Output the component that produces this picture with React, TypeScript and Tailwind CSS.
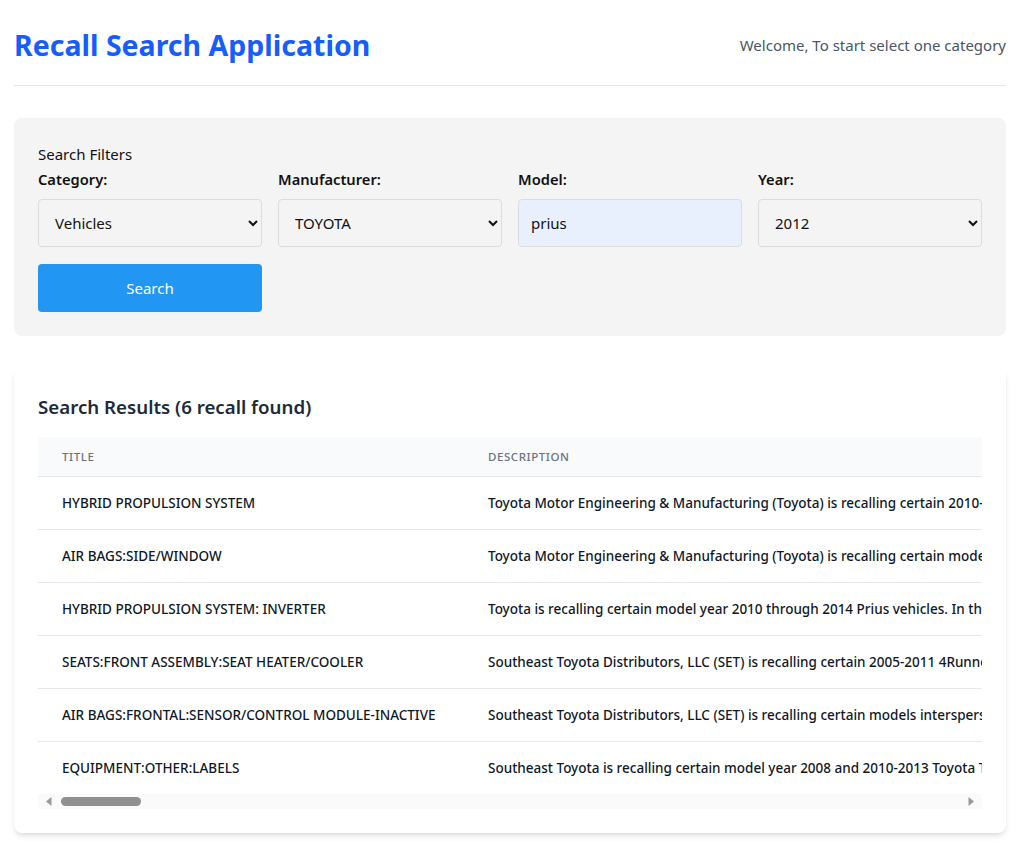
import { useState } from "react";

const recalls = [
  {
    title: "HYBRID PROPULSION SYSTEM",
    description:
      "Toyota Motor Engineering & Manufacturing (Toyota) is recalling certain 2010-2015 Prius vehicles. The hybrid system may enter a fail-safe mode and the vehicle may lose drive power.",
  },
  {
    title: "AIR BAGS:SIDE/WINDOW",
    description:
      "Toyota Motor Engineering & Manufacturing (Toyota) is recalling certain model year 2012 Prius vehicles. The curtain shield air bag inflator may not deploy as intended.",
  },
  {
    title: "HYBRID PROPULSION SYSTEM: INVERTER",
    description:
      "Toyota is recalling certain model year 2010 through 2014 Prius vehicles. In the affected vehicles, the software settings may cause higher thermal stress in transistors.",
  },
  {
    title: "SEATS:FRONT ASSEMBLY:SEAT HEATER/COOLER",
    description:
      "Southeast Toyota Distributors, LLC (SET) is recalling certain 2005-2011 4Runner, Camry, Prius and Tundra vehicles equipped with aftermarket seat heaters.",
  },
  {
    title: "AIR BAGS:FRONTAL:SENSOR/CONTROL MODULE-INACTIVE",
    description:
      "Southeast Toyota Distributors, LLC (SET) is recalling certain models interspersed among model years 2009-2012 vehicles that had seat covers installed.",
  },
  {
    title: "EQUIPMENT:OTHER:LABELS",
    description:
      "Southeast Toyota is recalling certain model year 2008 and 2010-2013 Toyota Tundra, Prius and Camry vehicles. The load carrying capacity label may be incorrect.",
  },
];

function App() {
  const [category, setCategory] = useState("Vehicles");
  const [manufacturer, setManufacturer] = useState("TOYOTA");
  const [model, setModel] = useState("prius");
  const [year, setYear] = useState("2012");

  const selectClass =
    "h-12 w-full rounded border border-[#dcdcdc] bg-[#f4f4f4] px-3 text-[15px] text-[#111] outline-none";

  return (
    <div
      className="min-h-screen bg-white pl-[14px] pr-[22px] text-[#111]"
      style={{ fontFamily: '"Noto Sans", "Open Sans", sans-serif' }}
    >
      {/* header */}
      <div className="flex h-[86px] items-center justify-between border-b border-[#e5e5e5] pt-[5px]">
        <h1 className="text-[28.5px] font-bold text-blue-600">Recall Search Application</h1>
        <p className="text-[15px] text-gray-600">Welcome, To start select one category</p>
      </div>

      {/* filters */}
      <div className="mt-8 rounded-lg bg-[#f4f4f4] px-6 pt-6 pb-6">
        <div className="text-[15px] leading-6">Search Filters</div>
        <div className="grid grid-cols-4 gap-4">
          <div>
            <label className="mb-[7px] block text-[14.7px] leading-[26px] font-semibold">Category:</label>
            <select className={selectClass} value={category} onChange={(e) => setCategory(e.target.value)}>
              <option>Vehicles</option>
              <option>Tires</option>
              <option>Child Seats</option>
            </select>
          </div>
          <div>
            <label className="mb-[7px] block text-[14.7px] leading-[26px] font-semibold">Manufacturer:</label>
            <select className={selectClass} value={manufacturer} onChange={(e) => setManufacturer(e.target.value)}>
              <option>TOYOTA</option>
              <option>HONDA</option>
              <option>FORD</option>
            </select>
          </div>
          <div>
            <label className="mb-[7px] block text-[14.7px] leading-[26px] font-semibold">Model:</label>
            <input
              className="h-12 w-full rounded border border-[#dcdcdc] bg-[#e8f0fe] px-3 text-[15px] outline-none"
              value={model}
              onChange={(e) => setModel(e.target.value)}
            />
          </div>
          <div>
            <label className="mb-[7px] block text-[14.7px] leading-[26px] font-semibold">Year:</label>
            <select className={selectClass} value={year} onChange={(e) => setYear(e.target.value)}>
              <option>2012</option>
              <option>2013</option>
              <option>2014</option>
            </select>
          </div>
        </div>
        <div className="mt-[17px] grid grid-cols-4 gap-4">
          <button className="h-12 rounded bg-[#2196f3] text-[15px] text-white">Search</button>
        </div>
      </div>

      {/* results */}
      <div className="mt-8 rounded-lg bg-white px-6 pt-[25px] pb-6 shadow-md">
        <h2 className="mb-4 text-[18.7px] leading-7 font-semibold text-gray-800">
          Search Results ({recalls.length} recall found)
        </h2>
        <div className="overflow-hidden">
          <table className="min-w-full whitespace-nowrap text-left">
            <thead className="bg-gray-50">
              <tr>
                <th className="px-6 py-3 text-[11.5px] leading-[15px] font-medium uppercase tracking-wider text-gray-500">
                  <div className="w-[378px]">Title</div>
                </th>
                <th className="px-6 py-3 text-[11.5px] leading-[15px] font-medium uppercase tracking-wider text-gray-500">
                  Description
                </th>
              </tr>
            </thead>
            <tbody className="divide-y divide-gray-200 border-t border-gray-200">
              {recalls.map((r) => (
                <tr key={r.title}>
                  <td className="px-6 py-4 text-[13.5px] leading-5 font-medium text-gray-900">{r.title}</td>
                  <td className="px-6 py-4 text-[13.5px] leading-5 font-medium text-gray-900">{r.description}</td>
                </tr>
              ))}
            </tbody>
          </table>
          {/* horizontal scrollbar */}
          <div className="flex h-[15px] items-center bg-[#fafafa] px-[7px]">
            <svg width="8" height="9" viewBox="0 0 8 9" className="shrink-0">
              <path d="M6.5 0 L1 4.5 L6.5 9 Z" fill="#9a9a9a" />
            </svg>
            <div className="ml-2 h-[9px] w-[80px] rounded-full bg-[#909090]" />
            <div className="flex-1" />
            <svg width="8" height="9" viewBox="0 0 8 9" className="shrink-0">
              <path d="M1.5 0 L7 4.5 L1.5 9 Z" fill="#9a9a9a" />
            </svg>
          </div>
        </div>
      </div>
    </div>
  );
}

export default App;
